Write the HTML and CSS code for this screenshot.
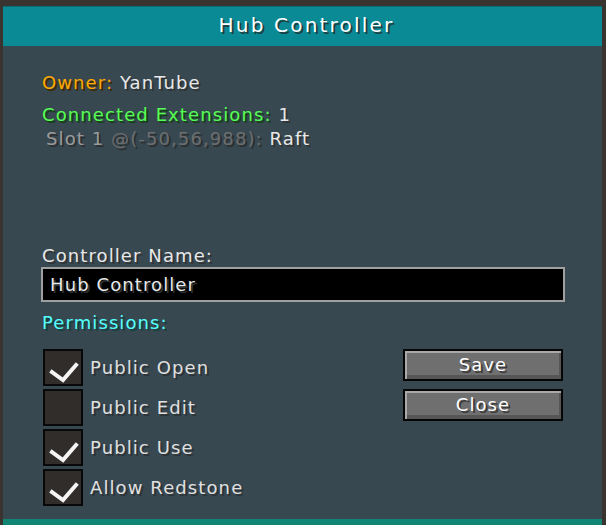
FILE: index.html
```html
<!DOCTYPE html>
<html>
<head>
<meta charset="utf-8">
<link rel="stylesheet" href="styles.css">
</head>
<body>
<div class="frame">
  <div class="titlebar"><span class="title">Hub Controller</span></div>
  <div class="content">
    <div class="line owner"><span class="gold">Owner:</span> <span class="white">YanTube</span></div>
    <div class="line ext"><span class="green">Connected Extensions:</span> <span class="white">1</span></div>
    <div class="line slot"><span class="gray">Slot 1</span> <span class="dgray">@(-50,56,988):</span> <span class="white">Raft</span></div>
    <div class="line namelabel white">Controller Name:</div>
    <div class="field"><span class="white">Hub Controller</span></div>
    <div class="line perms aqua">Permissions:</div>
    <div class="permarea">
      <div class="checks">
        <div class="row"><div class="box"><svg class="tick" viewBox="0 0 36 33" width="36" height="33"><polyline points="7,21 18,29 31,14" /></svg></div><span class="label">Public Open</span></div>
        <div class="row"><div class="box"></div><span class="label">Public Edit</span></div>
        <div class="row"><div class="box"><svg class="tick" viewBox="0 0 36 33" width="36" height="33"><polyline points="7,21 18,29 31,14" /></svg></div><span class="label">Public Use</span></div>
        <div class="row"><div class="box"><svg class="tick" viewBox="0 0 36 33" width="36" height="33"><polyline points="7,21 18,29 31,14" /></svg></div><span class="label">Allow Redstone</span></div>
      </div>
      <div class="buttons">
        <div class="btn"><span>Save</span></div>
        <div class="btn"><span>Close</span></div>
      </div>
    </div>
  </div>
  <div class="bottomline"></div>
</div>
</body>
</html>
```

FILE: styles.css
```css
html, body {
  margin: 0;
  padding: 0;
  background: #3a3430;
  width: 606px;
  height: 525px;
  overflow: hidden;
  font-family: "DejaVu Sans", sans-serif;
}
.frame {
  margin: 6px 4px 0 3px;
  display: flex;
  flex-direction: column;
}
.titlebar {
  height: 39px;
  background: #0a8a95;
  border-top: 1px solid #0a6d76;
  display: flex;
  align-items: center;
  justify-content: center;
}
.title {
  color: #ffffff;
  font-size: 20px;
  letter-spacing: 2.2px;
  text-shadow: 2px 2px 0 #1e3e42;
  margin-top: -4px;
  margin-left: 8px;
}
.content {
  height: 473px;
  background: #384850;
  box-sizing: border-box;
  padding: 25px 37px 0 39px;
  display: flex;
  flex-direction: column;
}
.bottomline {
  height: 7px;
  background: #108574;
}
.line {
  font-size: 18px;
  letter-spacing: 1.1px;
  line-height: 24px;
  height: 24px;
  white-space: nowrap;
}
.ext { margin-top: 8px; }
.slot { margin-left: 4px; }
.namelabel { margin-top: 94px; height: 22px; line-height: 22px; }
.perms { margin-top: 9px; }
.gold { color: #ffaa00; text-shadow: 2px 2px 0 #3f2a00; }
.green { color: #55ff55; text-shadow: 2px 2px 0 #153f15; }
.aqua { color: #55ffff; text-shadow: 2px 2px 0 #153f3f; }
.white { color: #e8e8e8; text-shadow: 2px 2px 0 #2e3436; }
.gray { color: #9a9a9a; text-shadow: 2px 2px 0 #2a2f31; }
.dgray { color: #6c6e6f; text-shadow: 2px 2px 0 #2a2f31; }
.field {
  margin-left: -1px;
  height: 35px;
  box-sizing: border-box;
  border: 2px solid #a0a0a0;
  background: #000;
  display: flex;
  align-items: center;
  padding-left: 7px;
  font-size: 18px;
  letter-spacing: 1.1px;
}
.permarea {
  margin-top: 14px;
  display: flex;
  justify-content: space-between;
}
.checks {
  display: flex;
  flex-direction: column;
  gap: 3px;
  margin-left: 1px;
}
.row {
  display: flex;
  align-items: center;
  height: 37px;
}
.box {
  width: 40px;
  height: 37px;
  box-sizing: border-box;
  border: 2px solid #080808;
  background: #302d2b;
}
.tick {
  display: block;
}
.tick polyline {
  fill: none;
  stroke: #f4f4f4;
  stroke-width: 4;
  stroke-linecap: square;
  stroke-linejoin: miter;
}
.label {
  margin-left: 7px;
  color: #e0e0e0;
  font-size: 18px;
  letter-spacing: 1.1px;
  text-shadow: 2px 2px 0 #2b3337;
}
.buttons {
  display: flex;
  flex-direction: column;
  gap: 8px;
  margin-right: 2px;
}
.btn {
  width: 160px;
  height: 32px;
  box-sizing: border-box;
  border: 2px solid #050505;
  background: #6f6f6f;
  box-shadow: inset 2px 2px 0 #a9a9a9, inset -2px -4px 0 #565656;
  display: flex;
  align-items: center;
  justify-content: center;
}
.btn span {
  color: #ffffff;
  font-size: 18px;
  letter-spacing: 1.1px;
  text-shadow: 2px 2px 0 #3a3a3a;
  margin-top: -2px;
}
```
